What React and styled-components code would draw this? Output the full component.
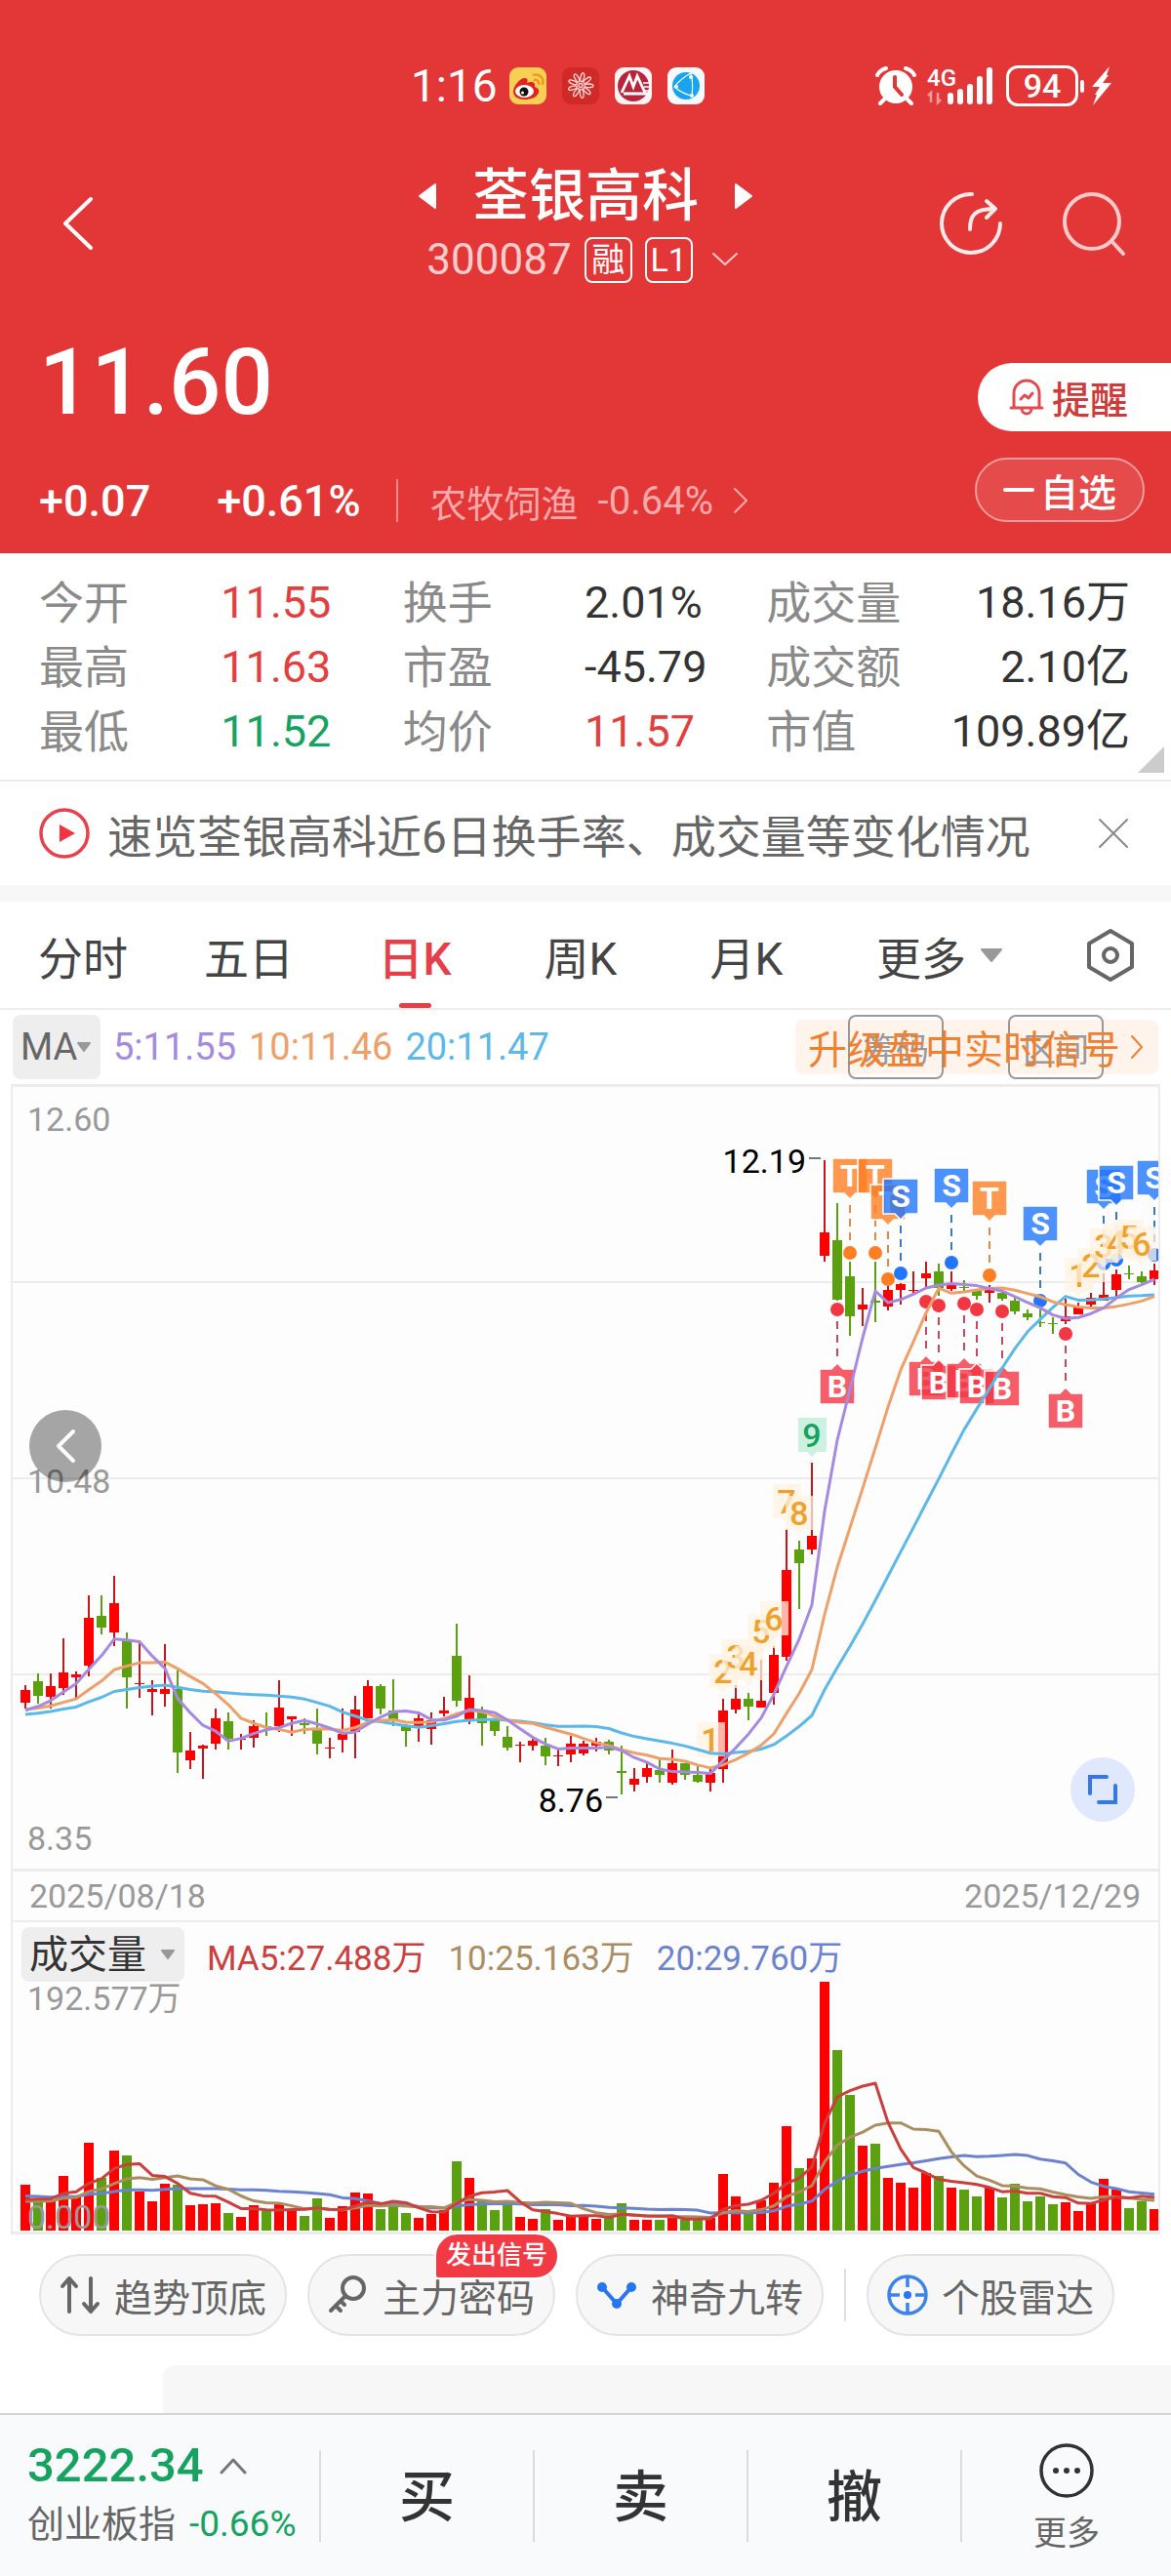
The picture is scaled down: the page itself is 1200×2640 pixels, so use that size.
import { useState } from 'react';
import styled, { createGlobalStyle } from 'styled-components';

/* palette */
const color = {
  head: '#e23637',
  up: '#e2403f',
  down: '#15a35f',
  text: '#333333',
  sub: '#8a8a8a',
  line: '#ececec',
  candleUp: '#fe0000',
  candleDown: '#5aa00f',
  wickUp: '#c4161c',
  ma5: '#a58be0',
  ma10: '#eda06a',
  ma20: '#5cb8e8',
};

const GlobalStyle = createGlobalStyle`
  * { box-sizing: border-box; }
  body {
    margin: 0;
    background-color: #fff;
    color: ${color.text};
    font-family: Roboto, "Noto Sans CJK SC", sans-serif;
  }
  button, select {
    margin: 0;
    padding: 0;
    border: 0;
    background: none;
    color: inherit;
    font-family: inherit;
    cursor: pointer;
  }
  a { color: inherit; text-decoration: none; }
  h1, p, dl, dt, dd { margin: 0; font-weight: 400; }
  svg { display: block; flex: none; }
`;

/* header */
const Header = styled.header`
  padding-bottom: 32px;
  color: #fff;
  background-color: ${color.head};
`;

const StatusBar = styled.div`
  display: flex;
  justify-content: space-between;
  align-items: center;
  height: 140px;
  padding: 36px 60px 0 421px;
`;

const StatusGroup = styled.div`
  display: flex;
  align-items: center;
  gap: ${(props) => props.$gap}px;
`;

const Clock = styled.span`
  margin-right: -4px;
  font-size: 46px;
  line-height: 46px;
`;

const Battery = styled.span`
  width: 74px;
  height: 42px;
  border: 3px solid #fff;
  border-radius: 12px;
  font-size: 34px;
  font-weight: 500;
  line-height: 36px;
  text-align: center;
`;

const NavBar = styled.nav`
  display: grid;
  grid-template-columns: 1fr auto 1fr;
  align-items: center;
  padding: 28px 46px 0;
`;

const BackButton = styled.button`
  justify-self: start;
  padding: 0 14px;
`;

const NavTitle = styled.div`
  display: flex;
  flex-direction: column;
  align-items: center;
  gap: 8px;
`;

const TitleRow = styled.div`
  display: flex;
  align-items: center;
  gap: 36px;
  h1 {
    font-size: 58px;
    font-weight: 500;
    line-height: 66px;
  }
`;

const CodeRow = styled.div`
  display: flex;
  align-items: center;
  height: 48px;
  gap: 13px;
  color: #ffcccc;
  font-size: 44px;
`;

const Mark = styled.span`
  width: 49px;
  height: 47px;
  border: 2px solid #fff;
  border-radius: 8px;
  color: #fff;
  font-size: 34px;
  line-height: 42px;
  text-align: center;
`;

const NavActions = styled.div`
  display: flex;
  justify-content: flex-end;
  gap: 60px;
`;

const Quote = styled.section`
  display: flex;
  justify-content: space-between;
  padding-left: 40px;
`;

const Price = styled.p`
  padding-top: 52px;
  font-size: 94px;
  font-weight: 500;
  line-height: 100px;
`;

const ChangeRow = styled.div`
  display: flex;
  align-items: center;
  margin-top: 49px;
  height: 44px;
  font-size: 45px;
  font-weight: 500;
  span + span { margin-left: 68px; }
`;

const Sector = styled.a`
  display: flex;
  align-items: center;
  gap: 20px;
  margin-left: 36px;
  padding-left: 33px;
  height: 44px;
  border-left: 2px solid #ef8a8a;
  color: #f9a9a9;
  font-size: 38px;
  font-weight: 400;
`;

const SectorRate = styled.em`
  font-size: 40px;
  font-style: normal;
`;

const QuoteActions = styled.div`
  display: flex;
  flex-direction: column;
  align-items: flex-end;
  gap: 27px;
  padding-top: 82px;
`;

const RemindButton = styled.button`
  display: flex;
  align-items: center;
  gap: 8px;
  width: 198px;
  height: 70px;
  padding-left: 32px;
  border-radius: 35px 0 0 35px;
  color: #cf3b3b;
  background-color: #fff;
  font-size: 39px;
  font-weight: 500;
`;

const WatchButton = styled.button`
  display: flex;
  align-items: center;
  justify-content: center;
  gap: 6px;
  width: 174px;
  height: 66px;
  margin-right: 27px;
  border: 2px solid #f39d9d;
  border-radius: 33px;
  background-color: #e64b4c;
  font-size: 39px;
  font-weight: 500;
`;

/* stats */
const Stats = styled.dl`
  position: relative;
  display: grid;
  grid-template-columns: repeat(3, 1fr);
  padding: 18px 42px 16px 40px;
  border-bottom: 2px solid ${color.line};
`;

const Stat = styled.div`
  display: flex;
  justify-content: ${(props) => (props.$end ? 'space-between' : 'flex-start')};
  height: 66px;
  line-height: 66px;
  font-size: 46px;
  dt {
    width: ${(props) => (props.$end ? 'auto' : '50%')};
    color: ${color.sub};
  }
  dd {
    color: ${(props) => color[props.$tone] || color.text};
    font-size: 45px;
  }
`;

const Corner = styled.svg`
  position: absolute;
  right: 7px;
  bottom: 7px;
`;

const Notice = styled.div`
  display: flex;
  align-items: center;
  height: 106px;
  padding: 0 43px 0 40px;
  a {
    flex: 1;
    margin-left: 18px;
    color: #666;
    font-size: 46px;
  }
`;

const Tabs = styled.div`
  display: grid;
  grid-template-columns: repeat(5, 170fr) 226fr 124fr;
  height: 128px;
  border-top: 17px solid #f7f7f7;
  border-bottom: 2px solid ${color.line};
`;

const Tab = styled.button`
  display: flex;
  align-items: center;
  justify-content: center;
  gap: 14px;
  position: relative;
  color: ${(props) => (props.$on ? '#e5404a' : '#444')};
  font-size: 46px;
  font-weight: ${(props) => (props.$on ? 500 : 400)};
  &::after {
    content: '';
    display: ${(props) => (props.$on ? 'block' : 'none')};
    position: absolute;
    bottom: 0;
    width: 33px;
    height: 5px;
    border-radius: 3px;
    background-color: #e5404a;
  }
`;

/* chart */
const LegendBar = styled.div`
  display: flex;
  align-items: center;
  gap: ${(props) => props.$gap}px;
  padding: ${(props) => props.$pad};
  font-size: ${(props) => props.$size}px;
`;

const Pick = styled.label`
  position: relative;
  height: ${(props) => props.$h}px;
  border-radius: 8px;
  background-color: #eee;
  select {
    width: ${(props) => props.$w}px;
    height: 100%;
    padding-left: 8px;
    -webkit-appearance: none;
    appearance: none;
    color: ${(props) => props.$c};
    font-size: ${(props) => props.$size}px;
  }
  svg {
    position: absolute;
    top: 50%;
    right: 9px;
    margin-top: -6px;
    pointer-events: none;
  }
`;

const Legend = styled.span`
  color: ${(props) => props.$c};
`;

const Promo = styled.div`
  position: relative;
  margin-left: auto;
  border-radius: 8px;
  background-color: #fff4ec;
`;

const PromoLink = styled.a`
  display: flex;
  align-items: center;
  gap: 10px;
  position: relative;
  height: 56px;
  padding: 0 15px 0 13px;
  color: #f08030;
  font-size: 40px;
`;

const GhostButton = styled.button`
  position: absolute;
  top: -5px;
  right: ${(props) => props.$right}px;
  width: 98px;
  height: 66px;
  border: 2px solid #999;
  border-radius: 8px;
  color: #999;
  font-size: 34px;
`;

const Frame = styled.section`
  margin: 0 11px;
  border: 2px solid ${color.line};
  border-top-width: 3px;
  border-bottom-width: 3px;
  background-color: #fdfdfd;
  svg.plot { width: 100%; height: auto; }
`;

const Stage = styled.div`
  position: relative;
`;

const RoundButton = styled.button`
  display: flex;
  align-items: center;
  justify-content: center;
  position: absolute;
  left: ${(props) => props.$left};
  right: ${(props) => props.$right};
  bottom: ${(props) => props.$bottom};
  width: ${(props) => props.$size}px;
  height: ${(props) => props.$size}px;
  border-radius: 50%;
  background-color: ${(props) => props.$bg};
`;

const Dates = styled.div`
  display: flex;
  justify-content: space-between;
  padding: 0 18px 0 17px;
  border-top: 3px solid ${color.line};
  border-bottom: 2px solid ${color.line};
  color: #999;
  font-size: 34px;
  line-height: 50px;
`;

/* tools */
const Tools = styled.div`
  display: flex;
  align-items: center;
  gap: 21px;
  padding: 20px 0 30px 40px;
`;

const Tool = styled.button`
  display: flex;
  align-items: center;
  gap: 14px;
  position: relative;
  height: 84px;
  padding: 0 19px;
  border: 2px solid #e4e4e4;
  border-radius: 42px;
  color: #666;
  background-color: #f7f7f7;
  font-size: 39px;
  white-space: nowrap;
`;

const Badge = styled.span`
  position: absolute;
  top: -24px;
  right: -6px;
  height: 48px;
  padding: 0 10px;
  border: 2px solid #fff;
  border-radius: 24px 24px 24px 4px;
  color: #fff;
  background-color: #f23a45;
  font-size: 26px;
  font-weight: 500;
  line-height: 43px;
`;

const Divider = styled.i`
  width: 2px;
  height: ${(props) => props.$h}px;
  background-color: #dedede;
`;

const NextPanel = styled.div`
  height: 49px;
  margin-left: 167px;
  border-top-left-radius: 12px;
  background-color: #f7f7f7;
`;

/* bottom */
const BottomBar = styled.footer`
  display: grid;
  grid-template-columns: 327fr 219fr 219fr 219fr 216fr;
  align-items: center;
  height: 167px;
  border-top: 2px solid #d4d4d8;
  background-color: #f9fafc;
`;

const IndexInfo = styled.a`
  padding: 0 0 6px 28px;
  p {
    display: flex;
    align-items: center;
    gap: 14px;
    color: #666;
    font-size: 38px;
    line-height: 48px;
  }
  p:first-child {
    gap: 16px;
    margin-bottom: 8px;
    font-size: 49px;
    line-height: 56px;
  }
  strong {
    color: ${color.down};
    font-weight: 500;
  }
  em {
    color: ${color.down};
    font-size: 37px;
    font-style: normal;
  }
`;

const BottomButton = styled.button`
  display: flex;
  flex-direction: column;
  align-items: center;
  justify-content: center;
  gap: 16px;
  height: 94px;
  padding-top: 4px;
  border-left: 2px solid #dcdcdf;
  font-size: 57px;
  font-weight: 500;
  line-height: 57px;
  small {
    color: #666;
    font-size: 34px;
    font-weight: 400;
    line-height: 40px;
  }
`;

// [up, high, top, bottom, low] in plot units
const candles = [
  [1, 613, 618, 631, 637], [0, 601, 609, 624, 632], [1, 601, 614, 625, 637], [1, 565, 600, 616, 623],
  [1, 599, 602, 605, 626], [1, 521, 544, 593, 604], [0, 521, 542, 554, 561], [1, 501, 529, 559, 573],
  [0, 559, 566, 605, 637], [1, 569, 611, 612, 626], [1, 608, 617, 620, 644], [1, 571, 617, 622, 635],
  [0, 598, 617, 682, 703], [1, 661, 680, 690, 699], [1, 674, 675, 678, 709], [1, 637, 647, 673, 679],
  [0, 641, 650, 668, 679], [1, 663, 668, 669, 679], [1, 649, 655, 667, 677], [0, 641, 655, 656, 665],
  [1, 608, 636, 655, 661], [1, 645, 645, 648, 665], [0, 647, 652, 654, 663], [0, 637, 659, 673, 684],
  [1, 667, 677, 678, 688], [1, 637, 663, 669, 682], [1, 624, 638, 661, 688], [1, 608, 614, 647, 647],
  [0, 612, 614, 637, 643], [0, 607, 639, 649, 655], [0, 653, 655, 660, 676], [1, 643, 647, 655, 671],
  [1, 641, 649, 658, 674], [1, 625, 639, 642, 645], [0, 550, 583, 629, 635], [1, 603, 626, 650, 653],
  [0, 635, 640, 652, 675], [0, 647, 648, 660, 665], [0, 655, 666, 677, 680], [1, 671, 674, 675, 692],
  [1, 667, 670, 675, 680], [0, 667, 675, 686, 695], [1, 677, 685, 686, 696], [1, 665, 673, 684, 692],
  [1, 670, 673, 683, 685], [1, 667, 671, 675, 681], [0, 669, 671, 680, 684], [0, 675, 701, 703, 725],
  [1, 698, 709, 715, 722], [1, 691, 698, 707, 713], [0, 689, 700, 705, 713], [1, 679, 693, 713, 715],
  [0, 693, 693, 705, 710], [0, 696, 705, 712, 713], [1, 698, 703, 713, 722], [1, 627, 639, 699, 713],
  [1, 613, 627, 638, 642], [0, 621, 627, 635, 649], [1, 587, 629, 636, 636], [1, 573, 582, 621, 633],
  [1, 453, 495, 584, 588], [0, 465, 474, 488, 535], [1, 385, 460, 474, 479], [1, 75, 149, 173, 179],
  [0, 119, 157, 218, 219], [0, 179, 194, 235, 255], [1, 206, 223, 228, 245], [0, 179, 219, 221, 241],
  [1, 204, 208, 225, 229], [1, 201, 202, 208, 223], [1, 189, 208, 209, 212], [1, 179, 191, 196, 206],
  [0, 181, 189, 206, 214], [1, 189, 201, 207, 209], [0, 198, 205, 206, 209], [0, 207, 209, 214, 218],
  [1, 203, 207, 211, 221], [0, 209, 211, 217, 219], [0, 216, 219, 230, 233], [0, 228, 232, 236, 239],
  [0, 228, 241, 242, 246], [0, 236, 242, 243, 253], [1, 217, 235, 240, 243], [1, 221, 225, 233, 233],
  [1, 211, 216, 223, 226], [1, 191, 213, 219, 219], [1, 187, 192, 208, 216], [0, 183, 191, 192, 197],
  [0, 189, 194, 200, 201], [1, 181, 188, 197, 203],
];

const volumes = [
  47, 30, 30, 56, 36, 90, 54, 82, 77, 40, 30, 48, 47, 26, 27, 28, 18, 14, 26, 20, 27, 21, 15, 33, 13,
  25, 39, 38, 22, 26, 18, 13, 17, 21, 71, 54, 31, 21, 28, 14, 12, 22, 11, 15, 16, 12, 13, 28, 11, 11,
  11, 15, 11, 11, 13, 58, 35, 18, 31, 49, 107, 64, 74, 255, 185, 139, 87, 89, 54, 49, 44, 59, 56, 44,
  42, 35, 44, 34, 48, 30, 35, 27, 29, 20, 28, 53, 42, 23, 30, 22,
];

// days before the first visible one, only needed by the averages
const pastCloses = [...Array(10).fill(648), ...Array(5).fill(637), ...Array(4).fill(644)];
const pastVolumes = [...Array(10).fill(41), ...Array(9).fill(28)];

const closes = candles.map(([up, , top, bottom]) => (up ? top : bottom));

const xAt = (i) => 13 + i * 13;

const average = (past, values, n) => {
  const all = [...past, ...values];
  return values.map((v, i) => {
    const end = i + past.length + 1;
    return all.slice(end - n, end).reduce((a, b) => a + b, 0) / n;
  });
};

const toPoints = (values) => values.map((y, i) => `${xAt(i)},${y.toFixed(1)}`).join(' ');

// [letter, day, y of the dot]
const signals = [
  ['T', 65, 170], ['T', 67, 170], ['T', 68, 197], ['S', 69, 191], ['S', 73, 180], ['T', 76, 193],
  ['S', 80, 219], ['S', 85, 181], ['S', 86, 177], ['S', 89, 172],
  ['B', 64, 228], ['B', 71, 220], ['B', 72, 224], ['B', 74, 222], ['B', 75, 228], ['B', 77, 230],
  ['B', 82, 253],
];
const signalColor = { T: '#fe7e22', S: '#2176fb', B: '#f23642' };

// [count, day, y of the tag]
const counts = [
  [1, 54, 651], [2, 55, 581], [3, 56, 566], [4, 57, 573], [5, 58, 540], [6, 59, 527], [7, 60, 407],
  [8, 61, 419], [9, 62, 339],
  [1, 83, 175], [2, 84, 165], [3, 85, 145], [4, 86, 141], [5, 87, 136], [6, 88, 143],
];

const Signal = ({ type, day, y }) => {
  const x = xAt(day);
  const buy = type === 'B';
  const top = buy ? y + 61 : y - 97;
  const tag = buy
    ? `M${x - 18} ${top}h12l6-6 6 6h12v36h-36z`
    : `M${x - 18} ${top}h36v36h-12l-6 6-6-6h-12z`;
  return (
    <g>
      <path
        d={buy ? `M${x} ${y + 12}V${top - 8}` : `M${x} ${top + 48}V${y - 10}`}
        stroke={type === 'S' ? '#3a7cc0' : type === 'T' ? '#dc8a4a' : '#c84a5a'}
        strokeWidth="2"
        strokeDasharray="8 6"
      />
      <circle cx={x} cy={y} r="7" fill={signalColor[type]} />
      <path d={tag} fill={signalColor[type]} fillOpacity="0.8" stroke="#fff" strokeWidth="1.5" />
      <text x={x} y={top + 29} textAnchor="middle" fontSize="32" fontWeight="700" fill="#fff">{type}</text>
    </g>
  );
};

const Count = ({ value, day, y }) => {
  const x = xAt(day);
  const last = value === 9;
  return (
    <g>
      <path
        d={`M${x - 14} ${y}h29v35h-10l-5 5-5-5h-9z`}
        fill={last ? '#c8eedd' : '#fff1e2'}
        fillOpacity={last ? 0.9 : 0.75}
      />
      <text x={x} y={y + 30} textAnchor="middle" fontSize="34" fontWeight="500" fill={last ? '#15a35f' : '#efa12c'}>
        {value}
      </text>
    </g>
  );
};

const KLinePlot = () => (
  <svg className="plot" viewBox="0 0 1174 801" fontFamily="Roboto, sans-serif">
    {[200, 401, 602].map((y) => (
      <path key={y} d={`M0 ${y}H1174`} stroke={color.line} strokeWidth="2" />
    ))}
    {candles.map(([up, high, top, bottom, low], i) => (
      <g key={i}>
        <rect x={xAt(i) - 1} y={high} width="2" height={low - high} fill={up ? color.wickUp : color.candleDown} />
        <rect
          x={xAt(i) - 5}
          y={top}
          width="10"
          height={Math.max(bottom - top, 1)}
          fill={up ? color.candleUp : color.candleDown}
        />
      </g>
    ))}
    {signals.map(([type, day, y]) => <Signal key={type + day} type={type} day={day} y={y} />)}
    {counts.map(([value, day, y]) => <Count key={day} value={value} day={day} y={y} />)}
    <g fill="none" strokeWidth="3" strokeLinejoin="round">
      <polyline points={toPoints(average(pastCloses, closes, 20))} stroke={color.ma20} />
      <polyline points={toPoints(average(pastCloses, closes, 10))} stroke={color.ma10} />
      <polyline points={toPoints(average(pastCloses, closes, 5))} stroke={color.ma5} />
    </g>
    <g fontSize="34" fill="#999">
      <text x="15" y="45">12.60</text>
      <text x="15" y="416">10.48</text>
      <text x="15" y="782">8.35</text>
    </g>
    <g fontSize="34" fill="#000">
      <text x="813" y="88" textAnchor="end">12.19</text>
      <text x="605" y="743" textAnchor="end">8.76</text>
    </g>
    <path d="M816 73h12M608 728h12" stroke="#777" strokeWidth="2" />
  </svg>
);

const VolumePlot = () => {
  const line = (n) => toPoints(average(pastVolumes, volumes, n).map((v) => 255 - v));
  return (
    <svg className="plot" viewBox="0 0 1174 256" fontFamily='Roboto, "Noto Sans CJK SC", sans-serif'>
      {volumes.map((v, i) => (
        <rect
          key={i}
          x={xAt(i) - 5}
          y={255 - v}
          width="10"
          height={v}
          fill={candles[i][0] ? color.candleUp : color.candleDown}
        />
      ))}
      <g fill="none" strokeWidth="3" strokeLinejoin="round">
        <polyline points={line(20)} stroke="#6b83cf" />
        <polyline points={line(10)} stroke="#ab8d62" />
        <polyline points={line(5)} stroke="#c9403f" />
      </g>
      <g fontSize="34" fill="#999">
        <text x="15" y="29">192.577万</text>
        <text x="15" y="253">0.000</text>
      </g>
    </svg>
  );
};

/* icons */
const Stroke = ({ w, h, d, c = 'currentColor', s = 3 }) => (
  <svg
    width={w}
    height={h}
    viewBox={`0 0 ${w} ${h}`}
    fill="none"
    stroke={c}
    strokeWidth={s}
    strokeLinecap="round"
    strokeLinejoin="round"
  >
    <path d={d} />
  </svg>
);

const Triangle = ({ w, h, d, c }) => (
  <svg width={w} height={h} viewBox={`0 0 ${w} ${h}`}>
    <path d={d} fill={c} stroke={c} strokeWidth="2" strokeLinejoin="round" />
  </svg>
);

const AppIcons = () => (
  <>
    <svg width="38" height="38" viewBox="0 0 38 38">
      <rect width="38" height="38" rx="9" fill="#f8cf55" />
      <path d="M4 25c0-6 7-14 12-14 3 0 3 3 2 5 5-2 9-1 8 4 3 1 5 3 4 6-2 5-8 7-14 7-7 0-12-3-12-8z" fill="#e0241f" />
      <ellipse cx="15.500" cy="24.500" rx="9.500" ry="6.500" fill="#fff" />
      <circle cx="15" cy="25" r="4.500" fill="#111" />
      <circle cx="13.500" cy="26" r="1.500" fill="#fff" />
      <path d="M25 13c4-1 6 2 5 5M24 8c7-2 12 3 10 10" fill="none" stroke="#ef9a1a" strokeWidth="2.500" />
    </svg>
    <svg width="38" height="38" viewBox="0 0 38 38">
      <rect width="38" height="38" rx="9" fill="#d02a28" />
      <g fill="none" stroke="#ffdcd8" strokeWidth="1.300">
        {[0, 40, 80, 120, 160, 200, 240, 280, 320].map((a) => (
          <ellipse key={a} cx="19" cy="10" rx="1.800" ry="4.500" transform={`rotate(${a + 12} 19 18.500)`} />
        ))}
        <circle cx="19" cy="18.500" r="2" />
      </g>
    </svg>
    <svg width="38" height="38" viewBox="0 0 38 38">
      <rect width="38" height="38" rx="9" fill="#fbf4f4" />
      <circle cx="19" cy="19" r="16" fill="#b8243b" />
      <path d="M7 26l8-17 4 11 4-11 8 17M9 27h26" fill="none" stroke="#fff" strokeWidth="2.800" />
      <path d="M29 16h7M30 20h6M31 24h5" stroke="#fff" strokeWidth="1.500" />
    </svg>
    <svg width="38" height="38" viewBox="0 0 38 38">
      <rect width="38" height="38" rx="9" fill="#f6fafd" />
      <circle cx="19" cy="19" r="14" fill="#18a4ee" />
      <path d="M24 6c-6 3-13 9-17 14 6 5 12 8 18 9 1-8 1-15-1-23z" fill="none" stroke="#fff" strokeWidth="1.200" />
      <circle cx="24" cy="10" r="2" fill="#fff" />
      <circle cx="9" cy="20" r="2" fill="#fff" />
      <circle cx="25" cy="29" r="2" fill="#fff" />
    </svg>
  </>
);

const AlarmIcon = () => (
  <svg width="42" height="40" viewBox="0 0 42 40" fill="none" stroke="#fff" strokeLinecap="round">
    <circle cx="21" cy="21" r="17" fill="#fff" stroke="none" />
    <path d="M2 9c2-4 5-6 9-7M40 9c-2-4-5-6-9-7M10 33l-5 5M32 33l5 5" strokeWidth="4" />
    <path d="M20 11v10l7 8" stroke={color.head} strokeWidth="4" />
  </svg>
);

const SignalIcon = () => (
  <svg width="70" height="42" viewBox="0 0 70 42" fill="#fff">
    <text x="0" y="21" fontSize="24" fontWeight="500" fontFamily="Roboto, sans-serif">4G</text>
    <path d="M4 38V28l-3 3M11 28v10l3-3" fill="none" stroke="#f19a9a" strokeWidth="2.500" />
    <rect x="21" y="28" width="6" height="12" rx="3" />
    <rect x="31" y="24" width="6" height="16" rx="3" />
    <rect x="41" y="19" width="6" height="21" rx="3" />
    <rect x="51" y="11" width="6" height="29" rx="3" />
    <rect x="61" y="2" width="6" height="38" rx="3" />
  </svg>
);

const ChargeIcon = () => (
  <svg width="34" height="42" viewBox="0 0 34 42" fill="#fff">
    <rect x="1" y="15" width="4" height="13" rx="2" />
    <path d="M31 1L13 22h8l-5 8h2l-4 11 19-23h-9l6-8h-2z" />
  </svg>
);

const ShareIcon = () => (
  <svg width="66" height="66" viewBox="0 0 66 66" fill="none" stroke="#ffe9e9" strokeWidth="4" strokeLinecap="round" strokeLinejoin="round">
    <path d="M34 3a30 30 0 1 0 29 30" />
    <path d="M32 39c0-14 4-21 26-21M49 10l9 8-9 9" />
  </svg>
);

const SearchIcon = () => (
  <svg width="66" height="66" viewBox="0 0 66 66" fill="none" stroke="#ffcaca" strokeWidth="4" strokeLinecap="round">
    <circle cx="31" cy="31" r="28" />
    <path d="M53 53l10 11" />
  </svg>
);

const BellIcon = () => (
  <svg width="36" height="38" viewBox="0 0 36 38" fill="none" stroke="#e04a50" strokeWidth="3" strokeLinejoin="round" strokeLinecap="round">
    <path d="M5 30V15a13 13 0 0 1 26 0v15M2 30h32M13 31a5 5 0 0 0 10 0" />
    <path d="M12 21l4-4 4 3 4-5" />
  </svg>
);

const PlayIcon = () => (
  <svg width="52" height="52" viewBox="0 0 52 52">
    <circle cx="26" cy="26" r="24" fill="none" stroke="#e8414d" strokeWidth="3.500" />
    <path d="M21 17v18l16-9z" fill="#f03642" />
  </svg>
);

const HexIcon = () => (
  <svg width="50" height="54" viewBox="0 0 50 54" fill="none" stroke="#666" strokeWidth="4" strokeLinejoin="round">
    <path d="M25 2l22 13v24L25 52 3 39V15z" />
    <circle cx="25" cy="27" r="7" />
  </svg>
);

const KeyIcon = () => (
  <svg width="42" height="42" viewBox="0 0 42 42" fill="none" stroke="#666" strokeWidth="4" strokeLinecap="round" strokeLinejoin="round">
    <circle cx="26" cy="14" r="11" />
    <path d="M18 22L3 37M8 32l5 5M13 27l4 4" />
  </svg>
);

const NineIcon = () => (
  <svg width="42" height="42" viewBox="0 0 42 42" fill="#2776f0">
    <path d="M6 13l15 17 15-17" fill="none" stroke="#2776f0" strokeWidth="4" />
    <circle cx="6" cy="13" r="5" />
    <circle cx="36" cy="13" r="5" />
    <circle cx="21" cy="30" r="5" />
  </svg>
);

const RadarIcon = () => (
  <svg width="42" height="42" viewBox="0 0 42 42" fill="none" stroke="#3e83ea" strokeWidth="3.500">
    <circle cx="21" cy="21" r="19" />
    <path d="M21 2v11M21 29v11M2 21h11M29 21h11" />
    <circle cx="21" cy="21" r="4" fill="#2776f0" stroke="none" />
  </svg>
);

const DotsIcon = () => (
  <svg width="56" height="56" viewBox="0 0 56 56">
    <circle cx="28" cy="28" r="26" fill="none" stroke="#333" strokeWidth="3.500" />
    <circle cx="17" cy="28" r="3" fill="#333" />
    <circle cx="28" cy="28" r="3" fill="#333" />
    <circle cx="39" cy="28" r="3" fill="#333" />
  </svg>
);

const stats = [
  ['今开', '11.55', 'up'], ['换手', '2.01%'], ['成交量', '18.16万'],
  ['最高', '11.63', 'up'], ['市盈', '-45.79'], ['成交额', '2.10亿'],
  ['最低', '11.52', 'down'], ['均价', '11.57', 'up'], ['市值', '109.89亿'],
];

const tabList = ['分时', '五日', '日K', '周K', '月K'];

const App = function(){
  const [tab, setTab] = useState('日K');

  return(
    <>
      <GlobalStyle />
      <Header>
        <StatusBar>
          <StatusGroup $gap={16}>
            <Clock>1:16</Clock>
            <AppIcons />
          </StatusGroup>
          <StatusGroup $gap={11}>
            <AlarmIcon />
            <SignalIcon />
            <StatusGroup $gap={1}>
              <Battery>94</Battery>
              <ChargeIcon />
            </StatusGroup>
          </StatusGroup>
        </StatusBar>
        <NavBar>
          <BackButton aria-label="返回">
            <Stroke w={38} h={56} d="M33 3L7 28l26 25" s={4} />
          </BackButton>
          <NavTitle>
            <TitleRow>
              <button aria-label="上一只"><Triangle w={20} h={28} d="M18 2v24L2 14z" c="#fff" /></button>
              <h1>荃银高科</h1>
              <button aria-label="下一只"><Triangle w={20} h={28} d="M2 2v24l16-12z" c="#fff" /></button>
            </TitleRow>
            <CodeRow>
              300087
              <Mark>融</Mark>
              <Mark>L1</Mark>
              <Stroke w={40} h={18} d="M8 3l12 11L32 3" s={2} />
            </CodeRow>
          </NavTitle>
          <NavActions>
            <button aria-label="分享"><ShareIcon /></button>
            <button aria-label="搜索"><SearchIcon /></button>
          </NavActions>
        </NavBar>
        <Quote>
          <div>
            <Price>11.60</Price>
            <ChangeRow>
              <span>+0.07</span>
              <span>+0.61%</span>
              <Sector href="#sector">
                农牧饲渔
                <SectorRate>-0.64%</SectorRate>
                <Stroke w={16} h={28} d="M2 2l12 12L2 26" s={2} />
              </Sector>
            </ChangeRow>
          </div>
          <QuoteActions>
            <RemindButton><BellIcon />提醒</RemindButton>
            <WatchButton><Stroke w={32} h={6} d="M2 3h28" s={4} />自选</WatchButton>
          </QuoteActions>
        </Quote>
      </Header>

      <Stats>
        {
          stats.map(([name, value, tone], idx) => (
            <Stat key={name} $tone={tone} $end={idx % 3 === 2}>
              <dt>{name}</dt>
              <dd>{value}</dd>
            </Stat>
          ))
        }
        <Corner width="27" height="27" viewBox="0 0 27 27"><path d="M27 0v27H0z" fill="#ccc" /></Corner>
      </Stats>

      <Notice>
        <PlayIcon />
        <a href="#video">速览荃银高科近6日换手率、成交量等变化情况</a>
        <button aria-label="关闭"><Stroke w={32} h={32} d="M2 2l28 28M30 2L2 30" c="#888" s={2} /></button>
      </Notice>

      <Tabs>
        {
          tabList.map((item) => (
            <Tab key={item} $on={tab === item} onClick={() => { setTab(item); }}>{item}</Tab>
          ))
        }
        <Tab>更多<Triangle w={24} h={16} d="M2 2h20L12 14z" c="#999" /></Tab>
        <Tab aria-label="设置"><HexIcon /></Tab>
      </Tabs>

      <LegendBar $gap={13} $pad="5px 13px" $size={38}>
        <Pick $w={90} $h={66} $size={38} $c="#666">
          <select aria-label="指标" defaultValue="MA">
            <option>MA</option>
          </select>
          <Triangle w={16} h={12} d="M2 2h12L8 10z" c="#999" />
        </Pick>
        <Legend $c={color.ma5}>5:11.55</Legend>
        <Legend $c={color.ma10}>10:11.46</Legend>
        <Legend $c={color.ma20}>20:11.47</Legend>
        <Promo>
          <GhostButton $right={220}>筹码</GhostButton>
          <GhostButton $right={56}>区间</GhostButton>
          <PromoLink href="#signal">
            升级盘中实时信号
            <Stroke w={14} h={28} d="M2 3l10 11L2 25" s={2} />
          </PromoLink>
        </Promo>
      </LegendBar>

      <Frame>
        <Stage>
          <KLinePlot />
          <RoundButton aria-label="更早" $left="17px" $right="auto" $bottom="396px" $size={74} $bg="rgba(0, 0, 0, 0.35)">
            <Stroke w={22} h={36} d="M19 3L4 18l15 15" c="#fff" s={4} />
          </RoundButton>
          <RoundButton aria-label="全屏" $left="auto" $right="24px" $bottom="48px" $size={66} $bg="#dfe8fd">
            <svg width="34" height="34" viewBox="0 0 34 34" fill="none" stroke="#3377e8" strokeWidth="4" strokeLinecap="round">
              <path d="M4 21V4h17M30 13v17H13" />
            </svg>
          </RoundButton>
        </Stage>
        <Dates>
          <time>2025/08/18</time>
          <time>2025/12/29</time>
        </Dates>
        <LegendBar $gap={23} $pad="5px 9px 0" $size={35}>
          <Pick $w={167} $h={56} $size={40} $c="#333">
            <select aria-label="副图指标" defaultValue="成交量">
              <option>成交量</option>
            </select>
            <Triangle w={16} h={12} d="M2 2h12L8 10z" c="#999" />
          </Pick>
          <Legend $c="#c9403f">MA5:27.488万</Legend>
          <Legend $c="#ab8d62">10:25.163万</Legend>
          <Legend $c="#6b83cf">20:29.760万</Legend>
        </LegendBar>
        <VolumePlot />
      </Frame>

      <Tools>
        <Tool>
          <Stroke w={42} h={42} d="M10 38V4M3 12l7-8 7 8M32 4v34M25 30l7 8 7-8" s={4} />
          趋势顶底
        </Tool>
        <Tool><KeyIcon />主力密码<Badge>发出信号</Badge></Tool>
        <Tool><NineIcon />神奇九转</Tool>
        <Divider $h={54} />
        <Tool><RadarIcon />个股雷达</Tool>
      </Tools>
      <NextPanel />

      <BottomBar>
        <IndexInfo href="#index">
          <p><strong>3222.34</strong><Stroke w={28} h={18} d="M2 16L14 3l12 13" c="#777" s={3} /></p>
          <p>创业板指<em>-0.66%</em></p>
        </IndexInfo>
        <BottomButton>买</BottomButton>
        <BottomButton>卖</BottomButton>
        <BottomButton>撤</BottomButton>
        <BottomButton><DotsIcon /><small>更多</small></BottomButton>
      </BottomBar>
    </>
  )
}

export default App;
